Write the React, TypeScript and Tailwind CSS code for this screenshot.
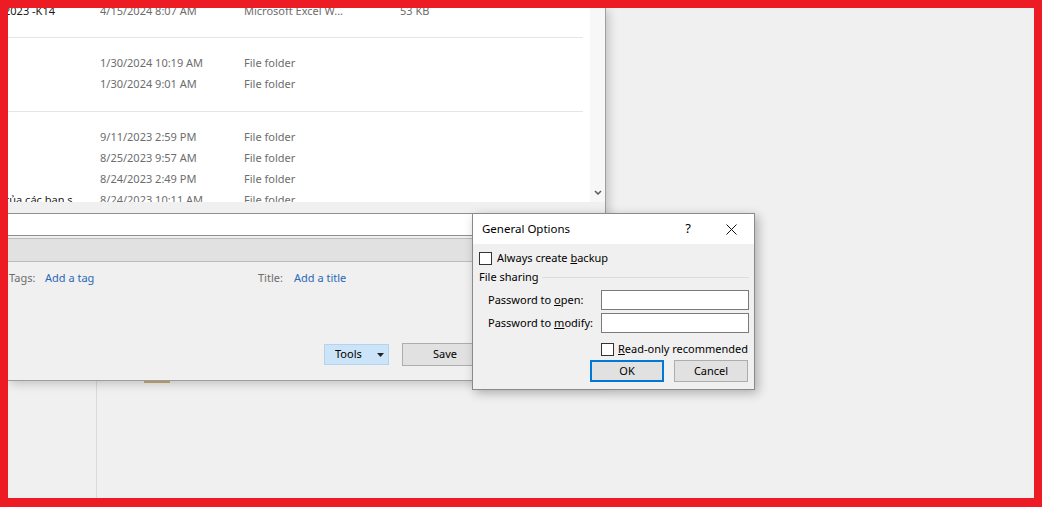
import React from 'react'

type Row = { name?: string; date: string; type: string; size?: string }

const groups: Row[][] = [
  [{ name: '2023 -K14', date: '4/15/2024 8:07 AM', type: 'Microsoft Excel W...', size: '53 KB' }],
  [
    { date: '1/30/2024 10:19 AM', type: 'File folder' },
    { date: '1/30/2024 9:01 AM', type: 'File folder' },
  ],
  [
    { date: '9/11/2023 2:59 PM', type: 'File folder' },
    { date: '8/25/2023 9:57 AM', type: 'File folder' },
    { date: '8/24/2023 2:49 PM', type: 'File folder' },
    { name: 'của các bạn s', date: '8/24/2023 10:11 AM', type: 'File folder' },
  ],
]

const FileRow = ({ row }: { row: Row }) => (
  <div className="flex h-[21px] items-center whitespace-nowrap text-[11px] leading-[21px] text-[#6d6d6d]">
    <div className="-ml-[4px] w-[96px]">
      <div className="w-[74px] overflow-hidden text-[#1a1a1a]">{row.name}</div>
    </div>
    <div className="w-[144px]">{row.date}</div>
    <div className="w-[156px]">{row.type}</div>
    <div>{row.size}</div>
  </div>
)

const CheckBox = () => <div className="h-[13px] w-[13px] shrink-0 border border-[#333333] bg-white" />

export default function App() {
  return (
    <div className="relative h-[507px] w-[1042px] overflow-hidden border-8 border-b-[9px] border-[#ed1c24] bg-[#f0f0f0] font-['Noto_Sans',sans-serif]">
      {/* background app */}
      <div className="flex h-full">
        <div className="h-full w-[89px] border-r border-[#d9d9d9]" />
        <div className="flex-1">
          <div className="ml-[47px] mt-[364px] h-[11px] w-[26px] bg-[#c8ad72]" />
        </div>
      </div>

      {/* Save As window */}
      <div className="absolute left-0 top-0 flex w-[598px] flex-col overflow-hidden border-r border-b border-[#9e9e9e] bg-[#f0f0f0] shadow-[2px_2px_10px_rgba(0,0,0,0.22)]">
        <div className="flex h-[194px] bg-white">
          <div className="w-[582px] overflow-hidden">
            <div className="-mt-[8px] flex flex-col">
              <FileRow row={groups[0][0]} />
              <div className="mr-[7px] mt-[16px] h-px bg-[#e5e5e5]" />
              <div className="mt-[14px]">
                {groups[1].map((r) => (
                  <FileRow key={r.date} row={r} />
                ))}
              </div>
              <div className="mr-[7px] mt-[17px] h-px bg-[#e5e5e5]" />
              <div className="mt-[14px]">
                {groups[2].map((r) => (
                  <FileRow key={r.date} row={r} />
                ))}
              </div>
            </div>
          </div>
          <div className="flex w-[15px] flex-col items-center justify-end bg-[#f7f7f7] pb-[7px]">
            <svg width="8" height="5" viewBox="0 0 8 5">
              <path d="M1 1 L4 4 L7 1" fill="none" stroke="#5a5a5a" strokeWidth="1.5" />
            </svg>
          </div>
        </div>
        <div className="h-[11px]" />
        <div className="h-[23px] border-y border-[#8f8f8f] bg-white" />
        <div className="h-[2px]" />
        <div className="h-[24px] border-y border-[#bcbcbc] bg-[#e1e1e1]" />
        <div className="h-[118px]">
          <div className="mt-[8px] flex h-[16px] items-center text-[11px] leading-[16px]">
            <div className="flex w-[250px] pl-[1px]">
              <span className="w-[36px] text-[#6d6d6d]">Tags:</span>
              <span className="text-[#2b68b5]">Add a tag</span>
            </div>
            <span className="w-[36px] text-[#6d6d6d]">Title:</span>
            <span className="text-[#2b68b5]">Add a title</span>
          </div>
          <div className="mt-[57px] flex items-center gap-[13px] pl-[316px] text-[11px] text-black">
            <div className="flex h-[21px] w-[65px] items-center justify-between border border-[#b3d3ef] bg-[#cce4f7] pl-[10px] pr-[4px]">
              <span>Tools</span>
              <svg width="7" height="4" viewBox="0 0 7 4">
                <path d="M0 0 H7 L3.5 4 Z" fill="#222" />
              </svg>
            </div>
            <div className="flex h-[23px] w-[86px] items-center justify-center border border-[#adadad] bg-[#e1e1e1]">
              Save
            </div>
          </div>
        </div>
      </div>

      {/* General Options dialog */}
      <div className="absolute left-[464px] top-[205px] flex h-[177px] w-[283px] flex-col border border-[#8a8a8a] bg-[#f0f0f0] text-[11px] text-black shadow-[3px_3px_10px_rgba(0,0,0,0.28)]">
        <div className="flex h-[30px] shrink-0 items-center bg-white">
          <div className="flex-1 pl-[9px] text-[11.5px]">General Options</div>
          <div className="flex w-[40px] justify-center text-[13px]">?</div>
          <div className="flex w-[46px] justify-center">
            <svg width="11" height="11" viewBox="0 0 11 11">
              <path d="M0.5 0.5 L10.5 10.5 M10.5 0.5 L0.5 10.5" stroke="#111" strokeWidth="1" />
            </svg>
          </div>
        </div>
        <div className="flex flex-col pl-[6px] pr-[5px]">
          <div className="mt-[8px] flex h-[13px] items-center gap-[5px]">
            <CheckBox />
            <span>
              Always create <u>b</u>ackup
            </span>
          </div>
          <div className="mt-[4px] flex h-[16px] items-center">
            <span>File sharing</span>
            <div className="ml-[3px] h-px flex-1 bg-[#dcdcdc]" />
          </div>
          <div className="mt-[5px] flex h-[20px] items-center">
            <span className="flex-1 pl-[9px]">
              Password to <u>o</u>pen:
            </span>
            <div className="h-[20px] w-[148px] border border-[#7a7a7a] bg-white" />
          </div>
          <div className="mt-[3px] flex h-[20px] items-center">
            <span className="flex-1 pl-[9px]">
              Password to <u>m</u>odify:
            </span>
            <div className="h-[20px] w-[148px] border border-[#7a7a7a] bg-white" />
          </div>
          <div className="ml-[122px] mt-[10px] flex h-[13px] items-center gap-[4px]">
            <CheckBox />
            <span>
              <u>R</u>ead-only recommended
            </span>
          </div>
          <div className="mt-[4px] flex justify-end gap-[10px] pr-[1px]">
            <div className="flex h-[22px] w-[74px] items-center justify-center border-2 border-[#0078d7] bg-[#e1e1e1]">
              OK
            </div>
            <div className="flex h-[22px] w-[74px] items-center justify-center border border-[#adadad] bg-[#e1e1e1]">
              Cancel
            </div>
          </div>
        </div>
      </div>
    </div>
  )
}
